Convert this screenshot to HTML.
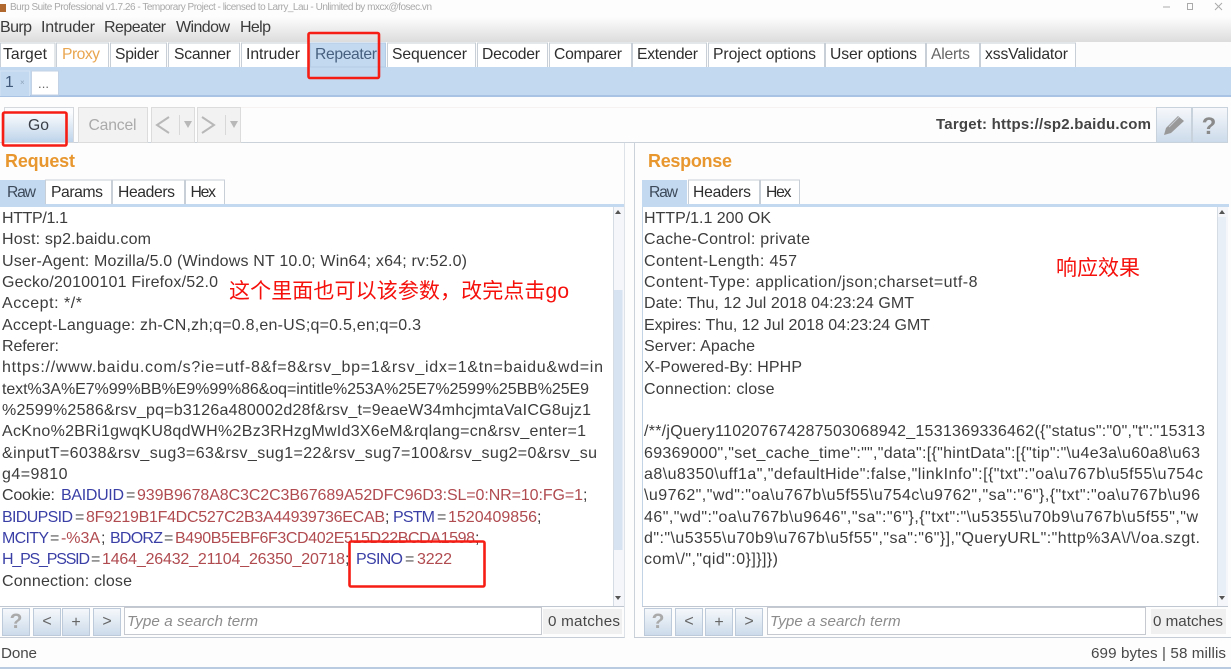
<!DOCTYPE html>
<html><head><meta charset="utf-8"><style>
*{box-sizing:border-box}
html,body{margin:0;padding:0;width:1231px;height:669px;overflow:hidden;background:#fdfdfd}
body{position:relative}
svg{position:absolute;left:0;top:0;filter:blur(0.3px)}
text{font-family:"Liberation Sans","Noto Sans CJK SC",sans-serif;white-space:pre}
.b text{font-size:16px;fill:#3c3c3c}
.tb text{font-size:15.7px;fill:#2e2e2e}
.k{fill:#3a3fa6 !important}
.v{fill:#b04b50 !important}
.g{fill:#555 !important}
.c text{font-family:"Liberation Sans","Noto Sans CJK SC",sans-serif;font-size:21px;fill:#f5100c}
.i text{font-size:15.2px;font-style:italic;fill:#8c8c8c}
.n text{font-size:15.2px;fill:#484848}
.sy text{font-size:16px;fill:#666;text-anchor:middle}
</style></head><body>
<svg width="1231" height="669" viewBox="0 0 1231 669" xmlns="http://www.w3.org/2000/svg">
<defs>
<linearGradient id="top" x1="0" y1="0" x2="0" y2="1"><stop offset="0" stop-color="#fdfdfd"/><stop offset="1" stop-color="#dcdcdc"/></linearGradient>
<linearGradient id="btn" x1="0" y1="0" x2="0" y2="1"><stop offset="0" stop-color="#f6f8fb"/><stop offset="1" stop-color="#cbdaea"/></linearGradient>
<linearGradient id="go" x1="0" y1="0" x2="0" y2="1"><stop offset="0.15" stop-color="#fbfcfd"/><stop offset="1" stop-color="#bdd3ea"/></linearGradient>
</defs>
<g>
<rect x="0" y="0" width="1231" height="669" fill="#fdfdfd"/>
<rect x="0" y="17" width="1231" height="25" fill="url(#top)"/>
<rect x="0" y="42" width="1231" height="25" fill="#fcfcfc"/>
<rect x="0" y="4" width="6" height="8" fill="#b0682e"/>
<path d="M1163 7h7" stroke="#aaa"/><rect x="1187.5" y="3.5" width="5" height="6" fill="none" stroke="#aaa"/><path d="M1215 3l7 7M1222 3l-7 7" stroke="#aaa"/>
<!-- blue band -->
<rect x="0" y="67" width="1231" height="29" fill="#c3d9f0"/>
<rect x="0" y="95" width="1231" height="2" fill="#a8c3e3"/>
<!-- top tabs -->
<g fill="#fff" stroke="#c9cfd6">
<path d="M0.5 67V43H55V67"/><path d="M56.5 67V43H108.5V67"/><path d="M110.5 67V43H166.5V67"/><path d="M168.5 67V43H239.5V67"/><path d="M241.5 67V43H309.5V67"/>
<path d="M387.5 67V43H475.5V67"/><path d="M477.5 67V43H547.5V67"/><path d="M549.5 67V43H631.5V67"/><path d="M632.5 67V43H706.5V67"/><path d="M708.5 67V43H824.5V67"/><path d="M825.5 67V43H925.5V67"/><path d="M926.5 67V43H979.5V67"/><path d="M980.5 67V43H1075.5V67"/>
</g>
<path d="M310.5 67V43H385.5V67Z" fill="#c3d9f0" stroke="#b5cce6"/>
<!-- inner tabs -->
<path d="M0 96V71H29.5V96" fill="#c3d9f0" stroke="#d5e4f4"/>
<path d="M31.5 95V71H58.5V95Z" fill="#fff" stroke="#c3d2e4"/>
<!-- toolbar -->
<path d="M240 107.5H1156" stroke="#f6f2f2"/>
<path d="M0 142.5H1156" stroke="#ccd2d9"/>
<rect x="4.5" y="107.5" width="69" height="35" fill="url(#go)" stroke="#d5d9de"/>
<rect x="78.5" y="107.5" width="69" height="35" fill="#f2f2f2" stroke="#dcdcdc"/>
<rect x="151.5" y="107.5" width="43" height="35" fill="#f2f2f2" stroke="#dcdcdc"/>
<rect x="197.5" y="107.5" width="43" height="35" fill="#f2f2f2" stroke="#dcdcdc"/>
<path d="M169 117L157 125L169 133M202 117L214 125L202 133" fill="none" stroke="#b8b8b8" stroke-width="2"/>
<path d="M179.5 115v20M225.5 115v20" stroke="#d8d8d8"/>
<path d="M184 121h8l-4 7zM230 121h8l-4 7z" fill="#b8b8b8"/>
<rect x="1156.5" y="107.5" width="35" height="35" fill="url(#btn)" stroke="#c8d2dc"/>
<rect x="1192.5" y="107.5" width="35" height="35" fill="url(#btn)" stroke="#c8d2dc"/>
<path d="M1164 135L1166 128L1178 116L1184 121L1171 133Z" fill="#999"/><path d="M1169 127L1179 117" stroke="#c5ccd3"/>
<!-- panes -->
<path d="M634.5 143V637" stroke="#ccd2d9"/>
<path d="M624.5 143V638" stroke="#dde2e8"/>
<path d="M0 637.5H624.5" stroke="#c5ccd5"/>
<path d="M634 637.5H1231" stroke="#c5ccd5"/>
<!-- subtabs -->
<path d="M0 204V180H45V204Z" fill="#c3d9f0"/>
<g fill="#fff" stroke="#c9cfd6"><path d="M45.5 204V180H111.5V204"/><path d="M112.5 204V180H184.5V204"/><path d="M185.5 204V180H224.5V204"/><path d="M688.5 204V180H759.5V204"/><path d="M760.5 204V180H799.5V204"/></g>
<path d="M642 204V180H687V204Z" fill="#c3d9f0"/>
<rect x="0" y="204" width="624" height="3" fill="#c3d9f0"/>
<rect x="642" y="204" width="587" height="3" fill="#c3d9f0"/>
<rect x="0" y="207" width="613" height="399" fill="#fff"/>
<rect x="642" y="207" width="575" height="399" fill="#fff"/>
<path d="M642.5 207V606" stroke="#c3d3e6"/>
<path d="M0 606.5H624M642 606.5H1228" stroke="#c0c7d0"/>
<rect x="613" y="207" width="11" height="399" fill="#f4f6f9"/>
<rect x="1217" y="207" width="11" height="399" fill="#f4f6f9"/>
<rect x="613.5" y="290" width="9" height="260" fill="#d7e3f1"/>
<rect x="1218" y="217" width="8" height="378" fill="#e8eff7"/>
<path d="M613.5 207V606M1217.5 207V606" stroke="#d5dce4"/>
<path d="M615 214h6l-3-4zM615 596h6l-3 4zM1219 214h6l-3-4zM1219 596h6l-3 4z" fill="#555"/>
<!-- search row -->
<g fill="url(#btn)" stroke="#bdcad9">
<rect x="2.5" y="608.5" width="27" height="27"/><rect x="33.5" y="608.5" width="27" height="27"/><rect x="62.5" y="608.5" width="27" height="27"/><rect x="93.5" y="608.5" width="27" height="27"/>
<rect x="644.5" y="608.5" width="27" height="27"/><rect x="675.5" y="608.5" width="27" height="27"/><rect x="705.5" y="608.5" width="27" height="27"/><rect x="735.5" y="608.5" width="27" height="27"/>
</g>
<rect x="124.5" y="607.5" width="417" height="27" fill="#fff" stroke="#c6cad0"/>
<rect x="767.5" y="607.5" width="378" height="27" fill="#fff" stroke="#c6cad0"/>
<rect x="543" y="609" width="79" height="25" fill="#f0f0f0"/>
<rect x="1151" y="609" width="75" height="25" fill="#f0f0f0"/>
<rect x="0" y="667" width="1231" height="2" fill="#b9cbe0"/>

<!-- title + menu -->
<text x="10" y="10" font-size="10" fill="#a9a9a9" textLength="422">Burp Suite Professional v1.7.26 - Temporary Project - licensed to Larry_Lau - Unlimited by mxcx@fosec.vn</text>
<g font-size="16" fill="#3a3a3a">
<text x="0" y="32" textLength="32">Burp</text><text x="41" y="32" textLength="54">Intruder</text><text x="104" y="32" textLength="62">Repeater</text><text x="176" y="32" textLength="54">Window</text><text x="240" y="32" textLength="31">Help</text>
</g>
<g class="tb">
<text x="3" y="59" textLength="44">Target</text>
<text x="62" y="59" textLength="38" style="fill:#e9a650">Proxy</text>
<text x="115" y="59" textLength="44">Spider</text>
<text x="174" y="59" textLength="57">Scanner</text>
<text x="246" y="59" textLength="54">Intruder</text>
<text x="315" y="59" textLength="62" style="fill:#47607f">Repeater</text>
<text x="392" y="59" textLength="75">Sequencer</text>
<text x="482" y="59" textLength="58">Decoder</text>
<text x="554" y="59" textLength="68">Comparer</text>
<text x="637" y="59" textLength="61">Extender</text>
<text x="713" y="59" textLength="103">Project options</text>
<text x="830" y="59" textLength="87">User options</text>
<text x="931" y="59" textLength="39" style="fill:#666">Alerts</text>
<text x="985" y="59" textLength="83">xssValidator</text>
<text x="5" y="87" textLength="6" style="fill:#40597a">1</text>
<text x="38" y="88" textLength="11" style="fill:#666;font-size:13px">...</text>
<text x="28" y="130" textLength="21" style="fill:#3a3f47">Go</text>
<text x="88.5" y="130" textLength="48" style="fill:#aaa">Cancel</text>
<text x="51" y="197" textLength="52">Params</text>
<text x="118" y="197" textLength="57">Headers</text>
<text x="190.5" y="197" textLength="25.5">Hex</text>
<text x="7" y="197" textLength="29" style="fill:#3d4a5a">Raw</text>
<text x="649" y="197" textLength="29" style="fill:#3d4a5a">Raw</text>
<text x="693" y="197" textLength="58">Headers</text>
<text x="766" y="197" textLength="25.5">Hex</text>
</g>
<text x="20" y="85" font-size="8" fill="#8da3b8">×</text>
<text x="936" y="129" font-size="15" font-weight="bold" fill="#444" textLength="215">Target: https://sp2.baidu.com</text>
<text x="1209" y="134" font-size="24" font-weight="bold" fill="#8a8a8a" text-anchor="middle">?</text>
<text x="5" y="167" font-size="18" font-weight="bold" fill="#e8962e" textLength="70">Request</text>
<text x="648" y="167" font-size="18" font-weight="bold" fill="#e8962e" textLength="84">Response</text>

<!-- request -->
<g class="b" transform="translate(0,-1)">
<text x="2" y="224" textLength="66">HTTP/1.1</text>
<text x="2" y="245" textLength="149">Host: sp2.baidu.com</text>
<text x="2" y="267" textLength="465">User-Agent: Mozilla/5.0 (Windows NT 10.0; Win64; x64; rv:52.0)</text>
<text x="2" y="288" textLength="216">Gecko/20100101 Firefox/52.0</text>
<text x="2" y="309" textLength="80">Accept: */*</text>
<text x="2" y="331" textLength="419">Accept-Language: zh-CN,zh;q=0.8,en-US;q=0.5,en;q=0.3</text>
<text x="2" y="352" textLength="57">Referer:</text>
<text x="2" y="373" textLength="601">https://www.baidu.com/s?ie=utf-8&amp;f=8&amp;rsv_bp=1&amp;rsv_idx=1&amp;tn=baidu&amp;wd=in</text>
<text x="2" y="395" textLength="587">text%3A%E7%99%BB%E9%99%86&amp;oq=intitle%253A%25E7%2599%25BB%25E9</text>
<text x="2" y="416" textLength="589">%2599%2586&amp;rsv_pq=b3126a480002d28f&amp;rsv_t=9eaeW34mhcjmtaVaICG8ujz1</text>
<text x="2" y="437" textLength="584">AcKno%2BRi1gwqKU8qdWH%2Bz3RHzgMwId3X6eM&amp;rqlang=cn&amp;rsv_enter=1</text>
<text x="2" y="459" textLength="595">&amp;inputT=6038&amp;rsv_sug3=63&amp;rsv_sug1=22&amp;rsv_sug7=100&amp;rsv_sug2=0&amp;rsv_su</text>
<text x="2" y="480" textLength="65.5">g4=9810</text>
<text x="2" y="501" textLength="53">Cookie:</text>
<text x="61" y="501" textLength="63" class="k">BAIDUID</text><text x="126" y="501" class="g">=</text><text x="137" y="501" textLength="446" class="v">939B9678A8C3C2C3B67689A52DFC96D3:SL=0:NR=10:FG=1</text><text x="583" y="501">;</text>
<text x="2" y="523" textLength="71" class="k">BIDUPSID</text><text x="75" y="523" class="g">=</text><text x="86" y="523" textLength="299" class="v">8F9219B1F4DC527C2B3A44939736ECAB</text><text x="385" y="523">;</text>
<text x="393" y="523" textLength="42" class="k">PSTM</text><text x="437" y="523" class="g">=</text><text x="448" y="523" textLength="89" class="v">1520409856</text><text x="537" y="523">;</text>
<text x="2" y="544" textLength="47" class="k">MCITY</text><text x="50" y="544" class="g">=</text><text x="61" y="544" textLength="39" class="v">-%3A</text><text x="101" y="544">;</text>
<text x="110" y="544" textLength="53" class="k">BDORZ</text><text x="164" y="544" class="g">=</text><text x="175" y="544" textLength="300" class="v">B490B5EBF6F3CD402E515D22BCDA1598</text><text x="475" y="544">;</text>
<text x="2" y="565" textLength="88" class="k">H_PS_PSSID</text><text x="91" y="565" class="g">=</text><text x="102" y="565" textLength="243" class="v">1464_26432_21104_26350_20718</text><text x="345" y="565">;</text>
<text x="356" y="565" textLength="47" class="k">PSINO</text><text x="405" y="565" class="g">=</text><text x="417" y="565" textLength="35" class="v">3222</text>
<text x="2" y="587" textLength="130">Connection: close</text>
</g>
<!-- response -->
<g class="b" transform="translate(0,-1)">
<text x="644" y="224" textLength="127">HTTP/1.1 200 OK</text>
<text x="644" y="245" textLength="166">Cache-Control: private</text>
<text x="644" y="267" textLength="153">Content-Length: 457</text>
<text x="644" y="288" textLength="333.5">Content-Type: application/json;charset=utf-8</text>
<text x="644" y="309" textLength="270">Date: Thu, 12 Jul 2018 04:23:24 GMT</text>
<text x="644" y="331" textLength="286">Expires: Thu, 12 Jul 2018 04:23:24 GMT</text>
<text x="644" y="352" textLength="111">Server: Apache</text>
<text x="644" y="373" textLength="158">X-Powered-By: HPHP</text>
<text x="644" y="395" textLength="130.5">Connection: close</text>
<text x="644" y="437" textLength="561">/**/jQuery110207674287503068942_1531369336462({"status":"0","t":"15313</text>
<text x="644" y="459" textLength="556">69369000","set_cache_time":"","data":[{"hintData":[{"tip":"\u4e3a\u60a8\u63</text>
<text x="644" y="480" textLength="559">a8\u8350\uff1a","defaultHide":false,"linkInfo":[{"txt":"oa\u767b\u5f55\u754c</text>
<text x="644" y="501" textLength="556">\u9762","wd":"oa\u767b\u5f55\u754c\u9762","sa":"6"},{"txt":"oa\u767b\u96</text>
<text x="644" y="523" textLength="554">46","wd":"oa\u767b\u9646","sa":"6"},{"txt":"\u5355\u70b9\u767b\u5f55","w</text>
<text x="644" y="544" textLength="556">d":"\u5355\u70b9\u767b\u5f55","sa":"6"}],"QueryURL":"http%3A\/\/oa.szgt.</text>
<text x="644" y="565" textLength="134">com\/","qid":0}]}]})</text>
</g>
<g class="c">
<text x="229" y="298" textLength="340">这个里面也可以该参数，改完点击go</text>
<text x="1056" y="275" textLength="84">响应效果</text>
</g>
<g class="sy">
<text x="16" y="628" style="font-size:21px;font-weight:bold;fill:#aaa">?</text><text x="47" y="626">&lt;</text><text x="76" y="627">+</text><text x="107" y="626">&gt;</text>
<text x="658" y="628" style="font-size:21px;font-weight:bold;fill:#aaa">?</text><text x="689" y="626">&lt;</text><text x="719" y="627">+</text><text x="749" y="626">&gt;</text>
</g>
<g class="i"><text x="127" y="626" textLength="131">Type a search term</text><text x="770" y="626" textLength="130.6">Type a search term</text></g>
<g class="n">
<text x="548" y="626" textLength="72">0 matches</text>
<text x="1153" y="626" textLength="70">0 matches</text>
<text x="1" y="658" textLength="36">Done</text>
<text x="1091" y="658" textLength="135">699 bytes | 58 millis</text>
</g>
</g>
<!-- red annotation boxes -->
<g fill="none" stroke="#f61d14" stroke-width="2.6">
<rect x="308.5" y="33" width="70.5" height="45" rx="1.5"/>
<rect x="3" y="112.5" width="63.5" height="33" rx="1.5"/>
<rect x="349.5" y="541.5" width="135" height="45" rx="1.5"/>
</g>
</svg>
</body></html>
